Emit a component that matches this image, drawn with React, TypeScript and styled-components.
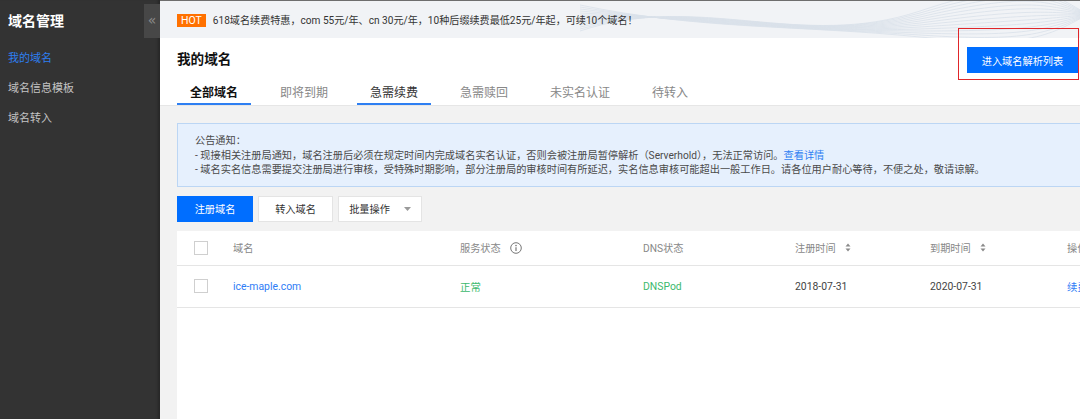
import React from "react";
import styled, { createGlobalStyle } from "styled-components";

const GlobalStyle = createGlobalStyle`
	html, body {
		margin: 0;
		padding: 0;
		background: #f2f2f2;
	}
	body {
		font-family: Roboto, "Noto Sans CJK SC", sans-serif;
		overflow: hidden;
	}
	* {
		box-sizing: border-box;
	}
`;

const Page = styled.div`
	display: flex;
	width: 1080px;
	height: 419px;
	overflow: hidden;
`;

const Sidebar = styled.aside`
	width: 160px;
	flex-shrink: 0;
	background: #333333;
	box-shadow: inset -4px 0 3px -2px rgba(0, 0, 0, 0.25);
	display: flex;
	flex-direction: column;
`;

const SideHead = styled.div`
	display: flex;
	align-items: flex-start;
	justify-content: space-between;
	padding-top: 4px;
`;

const SideTitle = styled.div`
	color: #ffffff;
	font-size: 14px;
	font-weight: 700;
	line-height: 34px;
	padding-left: 8px;
`;

const Collapse = styled.div`
	width: 16px;
	height: 34px;
	background: #474747;
	color: #8a8a8a;
	font-family: "DejaVu Sans", sans-serif;
	font-size: 14px;
	line-height: 32px;
	text-align: center;
`;

const SideNav = styled.nav`
	margin-top: 6px;
	display: flex;
	flex-direction: column;
`;

const SideItem = styled.div<{ active?: boolean }>`
	height: 30px;
	line-height: 30px;
	padding-left: 8px;
	font-size: 11px;
	color: ${(p) => (p.active ? "#2e7ff2" : "#c4c4c4")};
`;

const Main = styled.main`
	flex: 1;
	min-width: 0;
	display: flex;
	flex-direction: column;
	background: #f2f2f2;
`;

const Banner = styled.div`
	position: relative;
	height: 38px;
	flex-shrink: 0;
	border-top: 1px solid #6e6e6e;
	background: #f1f3f6;
	display: flex;
	align-items: center;
	padding-left: 17px;
	overflow: hidden;
`;

const Waves = styled.svg`
	position: absolute;
	left: 420px;
	top: 0;
`;

const Hot = styled.span`
	position: relative;
	background: #ff7100;
	color: #ffffff;
	font-size: 10.5px;
	line-height: 13px;
	padding: 0 4px;
	margin-right: 7px;
	margin-top: 1px;
`;

const BannerText = styled.span`
	position: relative;
	font-size: 10.1px;
	color: #333333;
`;

const Header = styled.header`
	height: 68px;
	flex-shrink: 0;
	background: #ffffff;
	border-bottom: 1px solid #e6e6e6;
	display: flex;
	padding-left: 17px;
`;

const HeaderLeft = styled.div`
	flex: 1;
	display: flex;
	flex-direction: column;
`;

const PageTitle = styled.h1`
	margin: 11px 0 0;
	font-size: 13.6px;
	font-weight: 700;
	line-height: 20px;
	color: #111111;
`;

const Tabs = styled.div`
	margin-top: auto;
	display: flex;
`;

const Tab = styled.div<{ active?: boolean; marked?: boolean }>`
	padding: 0 13px;
	margin-right: 16px;
	line-height: 20px;
	font-size: 12px;
	font-weight: ${(p) => (p.active ? 700 : 400)};
	color: ${(p) => (p.active ? "#111111" : p.marked ? "#333333" : "#888888")};
	border-bottom: 2px solid ${(p) => (p.active || p.marked ? "#2e7ff2" : "transparent")};
`;

const ActionWrap = styled.div`
	position: relative;
	margin-top: 9px;
	margin-right: 2px;
	align-self: flex-start;
`;

const Highlight = styled.div`
	position: absolute;
	left: -9px;
	top: -19px;
	right: -1px;
	bottom: -7px;
	border: 1.5px solid #e0262a;
	pointer-events: none;
`;

const Button = styled.button<{ primary?: boolean; width: number }>`
	width: ${(p) => p.width}px;
	height: 26px;
	padding: 0;
	border: 1px solid ${(p) => (p.primary ? "#006eff" : "#e4e4e4")};
	background: ${(p) => (p.primary ? "#006eff" : "#ffffff")};
	color: ${(p) => (p.primary ? "#ffffff" : "#333333")};
	font-family: inherit;
	font-size: 10.2px;
	display: flex;
	align-items: center;
	justify-content: center;
	gap: 14px;
`;

const Content = styled.section`
	flex: 1;
	display: flex;
	flex-direction: column;
	padding: 17px 0 0 17px;
`;

const Notice = styled.div`
	width: calc(100% + 20px);
	border: 1px solid #bcd6f4;
	background: #e6f0fd;
	padding: 10px 17px 8px;
	font-size: 10.2px;
	line-height: 14.5px;
	color: #4a4a4a;
`;

const NoticeLink = styled.span`
	color: #2e7ff2;
`;

const Toolbar = styled.div`
	display: flex;
	gap: 5px;
	margin-top: 9px;
`;

const Card = styled.div`
	flex: 1;
	margin-top: 9px;
	width: calc(100% + 20px);
	background: #ffffff;
`;

const Row = styled.div<{ head?: boolean }>`
	display: grid;
	grid-template-columns: 56px 227px 183px 152px 135px 137px 1fr;
	align-items: center;
	height: ${(p) => (p.head ? 35 : 42)}px;
	border-bottom: 1px solid #e5e5e5;
	font-size: ${(p) => (p.head ? 10.2 : 10.4)}px;
	color: ${(p) => (p.head ? "#888888" : "#444444")};
`;

const Cell = styled.div<{ tone?: "link" | "ok" }>`
	display: flex;
	align-items: center;
	gap: 9px;
	white-space: nowrap;
	color: ${(p) => (p.tone === "link" ? "#2f7df6" : p.tone === "ok" ? "#3cb96d" : "inherit")};
`;

const Check = styled.span`
	width: 14px;
	height: 14px;
	margin-left: 17px;
	border: 1px solid #cfcfcf;
	background: #ffffff;
`;

const SortIcon = () => (
	<svg width="6" height="9" viewBox="0 0 6 9">
		<path d="M3 0.5 L5.5 3.5 H0.5 Z" fill="#8a8a8a" />
		<path d="M3 8.5 L5.5 5.5 H0.5 Z" fill="#8a8a8a" />
	</svg>
);

const InfoIcon = () => (
	<svg width="12" height="12" viewBox="0 0 12 12">
		<circle cx="6" cy="6" r="5.3" fill="none" stroke="#777" strokeWidth="1" />
		<circle cx="6" cy="3.6" r="0.8" fill="#777" />
		<path d="M6 5.2 V9" stroke="#777" strokeWidth="1.2" />
	</svg>
);

const Caret = () => (
	<svg width="7" height="4" viewBox="0 0 7 4">
		<path d="M0 0 H7 L3.5 4 Z" fill="#9a9a9a" />
	</svg>
);

const tabs = ["全部域名", "即将到期", "急需续费", "急需赎回", "未实名认证", "待转入"];

function App() {
	return (
		<Page>
			<GlobalStyle />
			<Sidebar>
				<SideHead>
					<SideTitle>域名管理</SideTitle>
					<Collapse>«</Collapse>
				</SideHead>
				<SideNav>
					<SideItem active>我的域名</SideItem>
					<SideItem>域名信息模板</SideItem>
					<SideItem>域名转入</SideItem>
				</SideNav>
			</Sidebar>
			<Main>
				<Banner>
					<Waves width="500" height="38" viewBox="0 0 500 38">
						{Array.from({ length: 14 }).map((_, i) => (
							<path
								key={i}
								d={`M0 ${30 - i * 2} C 120 ${-10 + i * 3}, 220 ${50 - i * 2}, 340 ${10 + i * 2} S 470 ${-6 + i * 3}, 520 ${20 - i}`}
								fill="none"
								stroke="#d9e1ea"
								strokeWidth="0.8"
							/>
						))}
					</Waves>
					<Hot>HOT</Hot>
					<BannerText>
						618域名续费特惠，com 55元/年、cn 30元/年，10种后缀续费最低25元/年起，可续10个域名！
					</BannerText>
				</Banner>
				<Header>
					<HeaderLeft>
						<PageTitle>我的域名</PageTitle>
						<Tabs>
							{tabs.map((t, i) => (
								<Tab key={t} active={i === 0} marked={i === 2}>
									{t}
								</Tab>
							))}
						</Tabs>
					</HeaderLeft>
					<ActionWrap>
						<Button primary width={111}>
							进入域名解析列表
						</Button>
						<Highlight />
					</ActionWrap>
				</Header>
				<Content>
					<Notice>
						<div>公告通知：</div>
						<div>
							- 现接相关注册局通知，域名注册后必须在规定时间内完成域名实名认证，否则会被注册局暂停解析（Serverhold），无法正常访问。
							<NoticeLink>查看详情</NoticeLink>
						</div>
						<div>
							- 域名实名信息需要提交注册局进行审核，受特殊时期影响，部分注册局的审核时间有所延迟，实名信息审核可能超出一般工作日。请各位用户耐心等待，不便之处，敬请谅解。
						</div>
					</Notice>
					<Toolbar>
						<Button primary width={76}>
							注册域名
						</Button>
						<Button width={75}>转入域名</Button>
						<Button width={84}>
							批量操作
							<Caret />
						</Button>
					</Toolbar>
					<Card>
						<Row head>
							<Cell>
								<Check />
							</Cell>
							<Cell>域名</Cell>
							<Cell>
								服务状态
								<InfoIcon />
							</Cell>
							<Cell>DNS状态</Cell>
							<Cell>
								注册时间
								<SortIcon />
							</Cell>
							<Cell>
								到期时间
								<SortIcon />
							</Cell>
							<Cell>操作</Cell>
						</Row>
						<Row>
							<Cell>
								<Check />
							</Cell>
							<Cell tone="link">ice-maple.com</Cell>
							<Cell tone="ok">正常</Cell>
							<Cell tone="ok">DNSPod</Cell>
							<Cell>2018-07-31</Cell>
							<Cell>2020-07-31</Cell>
							<Cell tone="link">续费</Cell>
						</Row>
					</Card>
				</Content>
			</Main>
		</Page>
	);
}

export default App;
